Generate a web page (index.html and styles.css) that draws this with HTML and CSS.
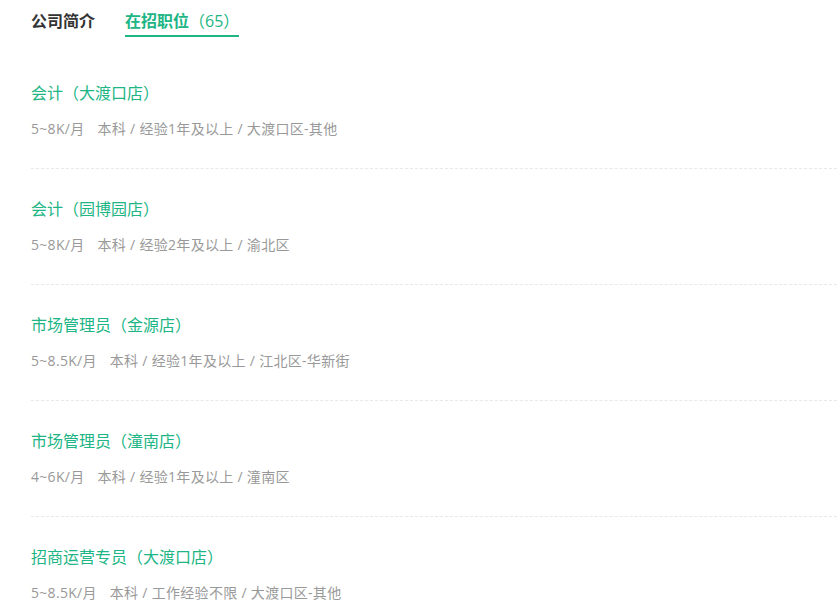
FILE: index.html
```html
<!DOCTYPE html>
<html lang="zh-CN">
<head>
    <meta charset="UTF-8">
    <meta name="viewport" content="width=device-width, initial-scale=1.0">
    <title>在招职位</title>
    <link rel="stylesheet" href="styles.css">
</head>
<body>
    <div class="tabs">
        <div class="tab">公司简介</div>
        <div class="tab active">在招职位<span class="count">（65）</span></div>
    </div>

    <ul class="job-list">
        <li class="job">
            <div class="job-title">会计（大渡口店）</div>
            <div class="job-info"><span class="salary">5~8K/月</span>本科 / 经验1年及以上 / 大渡口区-其他</div>
        </li>
        <li class="job">
            <div class="job-title">会计（园博园店）</div>
            <div class="job-info"><span class="salary">5~8K/月</span>本科 / 经验2年及以上 / 渝北区</div>
        </li>
        <li class="job">
            <div class="job-title">市场管理员（金源店）</div>
            <div class="job-info"><span class="salary">5~8.5K/月</span>本科 / 经验1年及以上 / 江北区-华新街</div>
        </li>
        <li class="job">
            <div class="job-title">市场管理员（潼南店）</div>
            <div class="job-info"><span class="salary">4~6K/月</span>本科 / 经验1年及以上 / 潼南区</div>
        </li>
        <li class="job">
            <div class="job-title">招商运营专员（大渡口店）</div>
            <div class="job-info"><span class="salary">5~8.5K/月</span>本科 / 工作经验不限 / 大渡口区-其他</div>
        </li>
    </ul>
</body>
</html>
```

FILE: styles.css
```css
body {
    margin: 0;
    padding: 0 0 0 31px;
    font-family: "Open Sans", "Noto Sans CJK SC", sans-serif;
    background-color: #fff;
    overflow: hidden;
}

.tabs {
    display: flex;
    gap: 30px;
    padding-top: 10px;
}

.tab {
    font-size: 16px;
    line-height: 22px;
    padding-bottom: 3px;
    border-bottom: 2px solid transparent;
    color: #333;
    font-weight: bold;
}

.tab.active {
    color: #20b584;
    border-bottom-color: #20b584;
}

.count {
    font-weight: normal;
}

.job-list {
    list-style: none;
    margin: 16px 0 0;
    padding: 0;
}

.job {
    padding: 29px 0 28px;
    border-bottom: 1px dashed #e8e8e8;
}

.job-title {
    font-size: 16px;
    line-height: 22px;
    color: #20b584;
}

.job-info {
    margin-top: 14px;
    font-size: 14px;
    line-height: 22px;
    letter-spacing: 0.3px;
    color: #999;
}

.salary {
    margin-right: 13px;
}
```
